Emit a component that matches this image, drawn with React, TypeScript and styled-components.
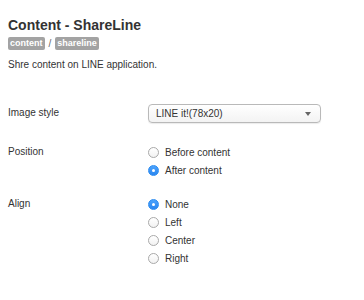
import React, { useState } from "react";
import styled, { createGlobalStyle } from "styled-components";

const GlobalStyle = createGlobalStyle`
  html, body {
    margin: 0;
    padding: 0;
    background: #fff;
  }
  body {
    font-family: "Liberation Sans", Arial, sans-serif;
    color: #333;
  }
`;

const Page = styled.div`
  padding: 17px 8px 0 8px;
  width: 364px;
  height: 300px;
  box-sizing: border-box;
`;

const Title = styled.h1`
  margin: 0;
  font-size: 14px;
  line-height: 16px;
  font-weight: bold;
  color: #333;
`;

const Crumbs = styled.div`
  display: flex;
  align-items: center;
  gap: 4px;
  margin-top: 4px;
  font-size: 10px;
  color: #666;
`;

const Badge = styled.span`
  display: inline-block;
  background: #a3a3a3;
  color: #fff;
  font-size: 9px;
  font-weight: bold;
  line-height: 13px;
  padding: 0 2px;
  border-radius: 2px;
`;

const Description = styled.p`
  margin: 9px 0 0 0;
  font-size: 10px;
  line-height: 12px;
  color: #333;
`;

const Form = styled.div`
  margin-top: 33px;
  display: flex;
  flex-direction: column;
`;

const Row = styled.div<{ $gap: number }>`
  display: grid;
  grid-template-columns: 140px 1fr;
  align-items: start;
  margin-bottom: ${(p) => p.$gap}px;
`;

const Label = styled.div`
  font-size: 10px;
  line-height: 18px;
  color: #333;
`;

const Select = styled.div`
  position: relative;
  width: 173px;
  height: 19px;
  box-sizing: border-box;
  border: 1px solid #b9b9b9;
  border-radius: 4px;
  background: linear-gradient(#ffffff, #f3f3f3);
  box-shadow: 0 1px 1px rgba(0, 0, 0, 0.08);
  font-size: 10px;
  line-height: 17px;
  padding-left: 7px;
  color: #333;
`;

const Arrow = styled.span`
  position: absolute;
  right: 9px;
  top: 7px;
  width: 0;
  height: 0;
  border-left: 3px solid transparent;
  border-right: 3px solid transparent;
  border-top: 4px solid #666;
`;

const RadioList = styled.div`
  display: flex;
  flex-direction: column;
`;

const Option = styled.label`
  display: flex;
  align-items: center;
  height: 18px;
  font-size: 10px;
  color: #333;
  cursor: pointer;
`;

const Dot = styled.span<{ $on: boolean }>`
  width: 11px;
  height: 11px;
  box-sizing: border-box;
  border-radius: 50%;
  margin-right: 6px;
  flex: none;
  position: relative;
  border: 1px solid ${(p) => (p.$on ? "#2d8cf0" : "#a9a9a9")};
  background: ${(p) =>
    p.$on ? "linear-gradient(#4ca3fc, #2a86f0)" : "linear-gradient(#fff, #f2f2f2)"};
  &::after {
    content: "";
    display: ${(p) => (p.$on ? "block" : "none")};
    position: absolute;
    left: 3px;
    top: 3px;
    width: 3px;
    height: 3px;
    border-radius: 50%;
    background: #fff;
  }
`;

function Radios({ items, initial }: { items: string[]; initial: string }) {
  const [value, setValue] = useState(initial);
  return (
    <RadioList>
      {items.map((it) => (
        <Option key={it} onClick={() => setValue(it)}>
          <Dot $on={value === it} />
          {it}
        </Option>
      ))}
    </RadioList>
  );
}

export default function App() {
  return (
    <>
      <GlobalStyle />
      <Page>
        <Title>Content - ShareLine</Title>
        <Crumbs>
          <Badge>content</Badge>/<Badge>shareline</Badge>
        </Crumbs>
        <Description>Shre content on LINE application.</Description>
        <Form>
          <Row $gap={20}>
            <Label>Image style</Label>
            <Select>
              LINE it!(78x20)
              <Arrow />
            </Select>
          </Row>
          <Row $gap={16}>
            <Label>Position</Label>
            <Radios items={["Before content", "After content"]} initial="After content" />
          </Row>
          <Row $gap={0}>
            <Label>Align</Label>
            <Radios items={["None", "Left", "Center", "Right"]} initial="None" />
          </Row>
        </Form>
      </Page>
    </>
  );
}
